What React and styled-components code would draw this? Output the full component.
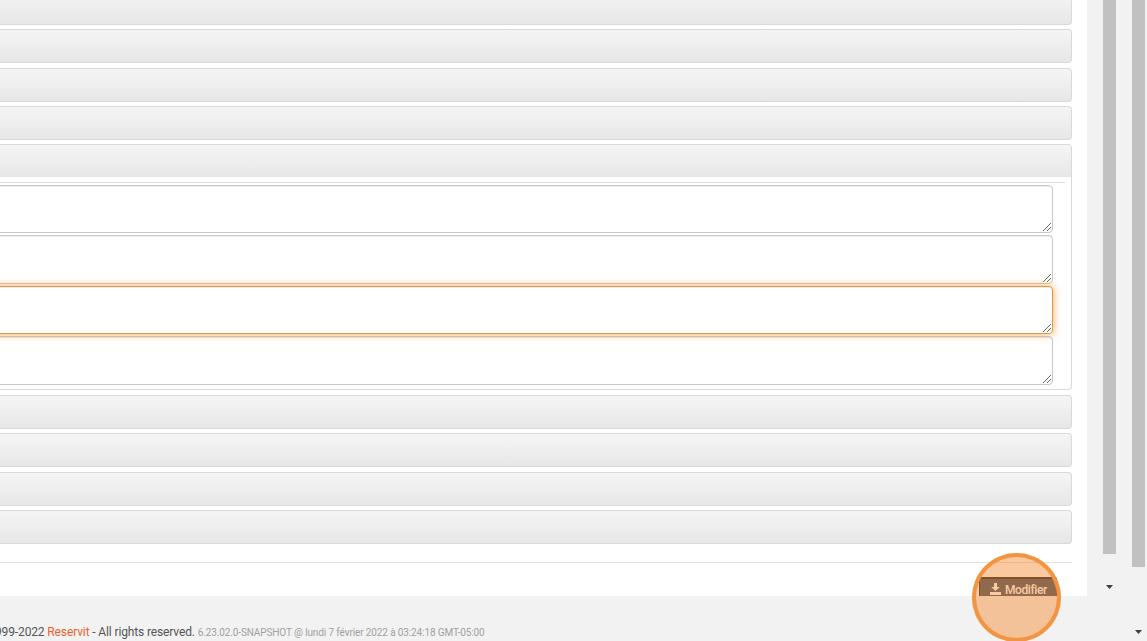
import React from "react";
import styled, { createGlobalStyle } from "styled-components";

const GlobalStyle = createGlobalStyle`
  * { box-sizing: border-box; }
  html, body { margin: 0; padding: 0; overflow: hidden; }
  body { background: #f2f2f2; font-family: Roboto, "Liberation Sans", sans-serif; }
`;

const Page = styled.div`
  position: relative;
  display: flex;
  width: 1147px;
  height: 641px;
  overflow: hidden;
  background: #f2f2f2;
`;

const Main = styled.main`
  width: 1087px;
  height: 641px;
  display: flex;
  flex-direction: column;
`;

const Content = styled.section`
  height: 596px;
  overflow: hidden;
  background: #fff;
  padding-right: 15px;
`;

const Bar = styled.div`
  height: ${(p) => p.$height || 34}px;
  margin-bottom: ${(p) => p.$gap}px;
  border: 1px solid #d9d9d9;
  border-left: 0;
  border-top-width: ${(p) => (p.$cut ? 0 : 1)}px;
  border-radius: ${(p) => (p.$cut ? "0 0 4px 0" : "0 4px 4px 0")};
  background: linear-gradient(${(p) => (p.$cut ? "#f1f1f1" : "#f5f5f5")}, #e7e7e7);
`;

const Panel = styled.div`
  height: 246px;
  margin-bottom: 5px;
  border: 1px solid #d9d9d9;
  border-left: 0;
  border-radius: 0 4px 4px 0;
  overflow: hidden;
`;

const PanelHeader = styled.div`
  height: 32px;
  background: linear-gradient(#f5f5f5, #e7e7e7);
`;

const PanelBody = styled.div`
  margin: 5px 6px 0 -20px;
  border-top: 1px solid #dcdcdc;
  padding: 2px 12px 0 0;
`;

const Field = styled.div`
  position: relative;
  height: ${(p) => p.$height || 48}px;
  margin-bottom: ${(p) => p.$gap || 0}px;
  border: 1px solid ${(p) => (p.$focused ? "#dd9a45" : "#c8c8c8")};
  border-radius: 4px;
  background: #fff;
  z-index: ${(p) => (p.$focused ? 1 : 0)};
  box-shadow: ${(p) =>
    p.$focused
      ? "inset 0 1px 1px rgba(0,0,0,.075), 0 0 8px rgba(245,145,40,.8)"
      : "inset 0 1px 1px rgba(0,0,0,.075)"};
`;

const GripIcon = styled.svg`
  position: absolute;
  right: 0;
  bottom: 1px;
`;

const Divider = styled.div`
  margin-top: 18px;
  height: 1px;
  background: #e2e2e2;
`;

const Actions = styled.div`
  display: flex;
  justify-content: flex-end;
  padding: 14px 15px 0 0;
`;

const SubmitButton = styled.button`
  display: flex;
  align-items: flex-start;
  gap: 4px;
  width: 78px;
  height: 28px;
  padding: 3px 0 0 9px;
  border: 1px solid #1c1c1c;
  border-top-width: 2px;
  border-radius: 3px;
  background: #384b60;
  color: #fff;
  font: 500 12px/16px Roboto, "Liberation Sans", sans-serif;
  letter-spacing: -0.4px;
  white-space: nowrap;
`;

const ButtonIcon = styled.svg`
  flex: none;
  margin-top: 1px;
`;

const Footer = styled.footer`
  height: 45px;
  padding-top: 28px;
  margin-left: -5px;
  font-size: 12px;
  line-height: 16px;
  letter-spacing: -0.13px;
  color: #555;
  white-space: nowrap;
`;

const Brand = styled.span`
  color: #e8622c;
`;

const Version = styled.span`
  font-size: 10px;
  letter-spacing: -0.12px;
  color: #a0a0a0;
`;

const ScrollTrack = styled.div`
  display: flex;
  flex-direction: column;
  align-items: center;
  width: 13px;
  height: 641px;
  margin-left: 16px;
`;

const ScrollThumb = styled.div`
  width: 13px;
  height: ${(p) => p.$height}px;
  background: #c1c1c1;
`;

const Arrow = styled.svg`
  margin-top: ${(p) => p.$top}px;
`;

const ClickMarker = styled.div`
  position: absolute;
  left: 972px;
  top: 553px;
  width: 89px;
  height: 89px;
  border-radius: 50%;
  background: rgba(246, 140, 53, 0.47);
  box-shadow: inset 0 0 0 4px #f39443;
`;

function Grip() {
  return (
    <GripIcon width="9" height="9" viewBox="0 0 9 9" shapeRendering="crispEdges">
      <path
        d="M0 8h1v1h-1zM1 7h1v1h-1zM2 6h1v1h-1zM3 5h1v1h-1zM4 4h1v1h-1zM5 3h1v1h-1zM6 2h1v1h-1zM7 1h1v1h-1zM4 8h1v1h-1zM5 7h1v1h-1zM6 6h1v1h-1zM7 5h1v1h-1z"
        fill="#666"
      />
    </GripIcon>
  );
}

function ScrollBar({ thumb, arrowGap }) {
  return (
    <ScrollTrack>
      <ScrollThumb $height={thumb} />
      <Arrow $top={arrowGap} width="7" height="4" viewBox="0 0 7 4">
        <path d="M0 0h7L3.5 4z" fill="#404040" />
      </Arrow>
    </ScrollTrack>
  );
}

export default function App() {
  return (
    <>
      <GlobalStyle />
      <Page>
        <Main>
          <Content>
            <Bar $cut $height={25} $gap={4} />
            <Bar $gap={5} />
            <Bar $gap={4} />
            <Bar $gap={4} />
            <Panel>
              <PanelHeader />
              <PanelBody>
                <Field $gap={2}><Grip /></Field>
                <Field $height={49} $gap={2}><Grip /></Field>
                <Field $focused $gap={2}><Grip /></Field>
                <Field $height={49}><Grip /></Field>
              </PanelBody>
            </Panel>
            <Bar $gap={4} />
            <Bar $gap={5} />
            <Bar $gap={4} />
            <Bar $gap={0} />
            <Divider />
            <Actions>
              <SubmitButton>
                <ButtonIcon width="12" height="12" viewBox="0 0 12 12" fill="currentColor">
                  <path d="M5 0h3v4h2.8L6.5 8 2.2 4H5zM1 9h11v3H1z" />
                </ButtonIcon>
                Modifier
              </SubmitButton>
            </Actions>
          </Content>
          <Footer>
            999-2022 <Brand>Reservit</Brand> - All rights reserved.{" "}
            <Version>6.23.02.0-SNAPSHOT @ lundi 7 février 2022 à 03:24:18 GMT-05:00</Version>
          </Footer>
        </Main>
        <ScrollBar thumb={554} arrowGap={31} />
        <ScrollBar thumb={567} arrowGap={63} />
        <ClickMarker />
      </Page>
    </>
  );
}
